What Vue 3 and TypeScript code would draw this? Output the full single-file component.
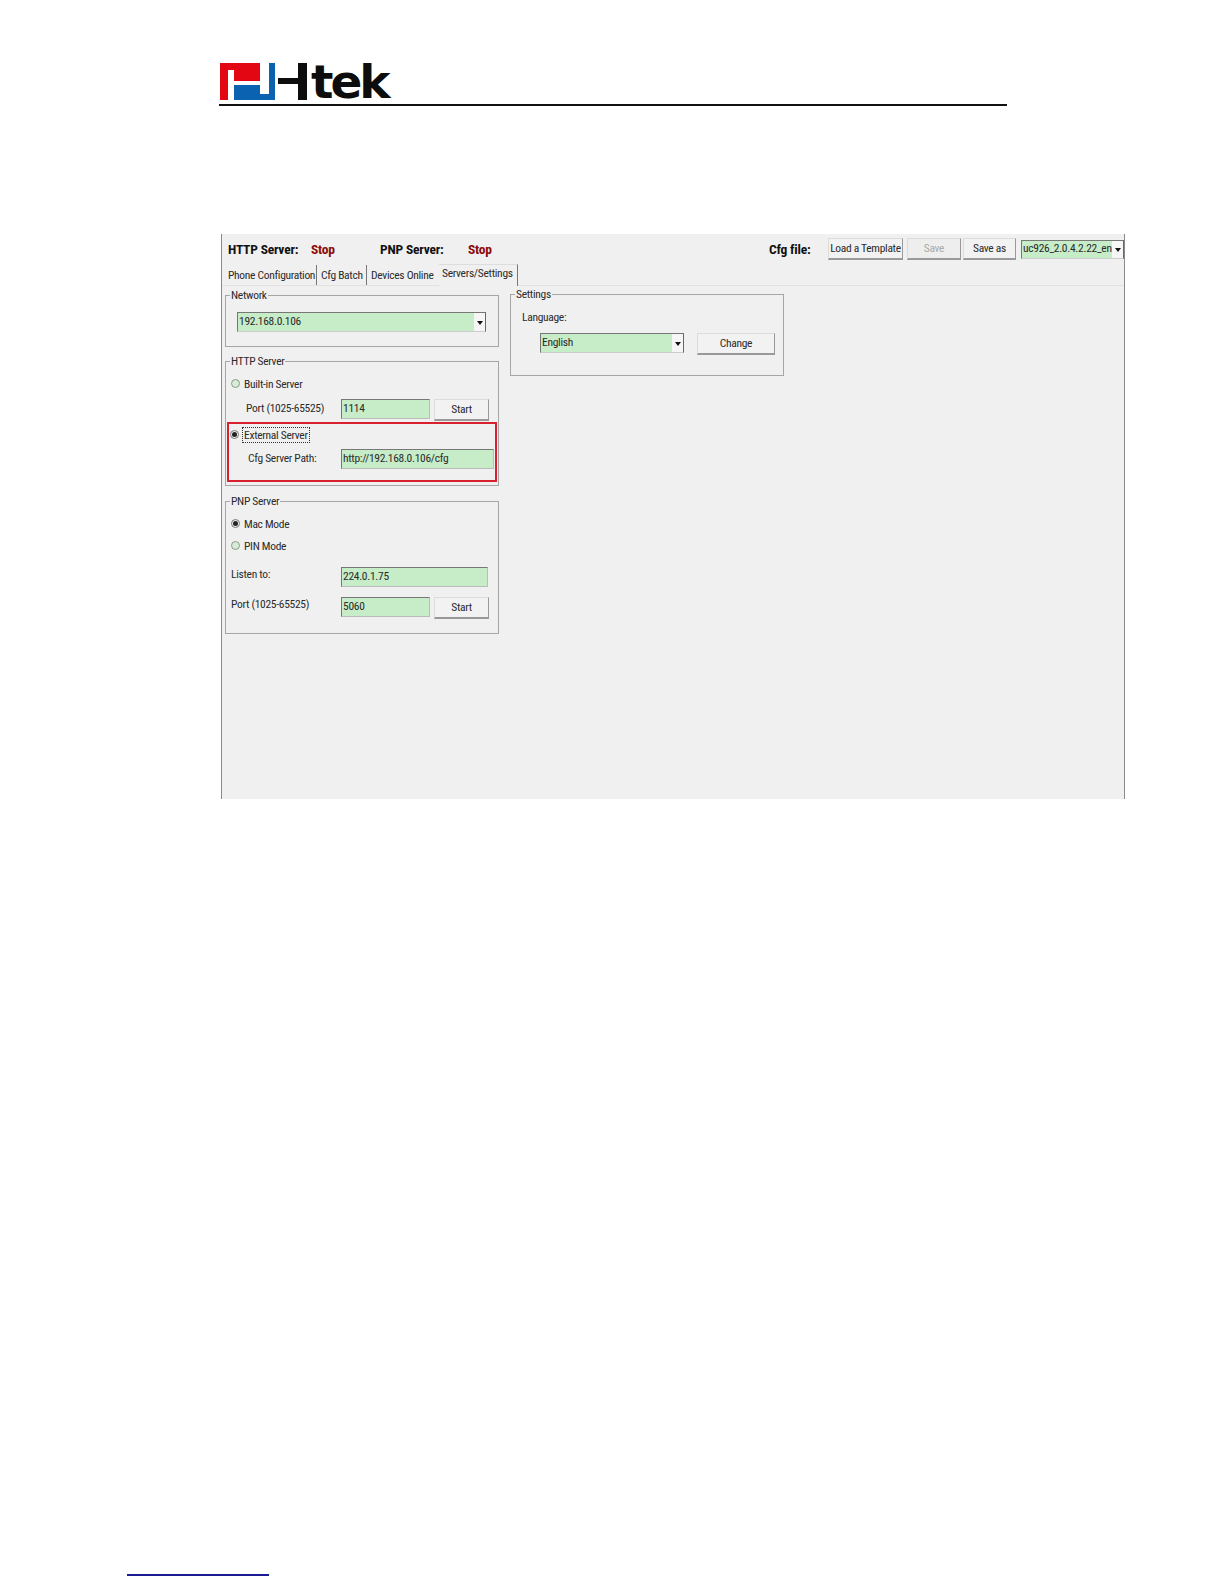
<script setup lang="ts">
const tabs: string[] = ['Phone Configuration', 'Cfg Batch', 'Devices Online']
</script>

<template>
  <div class="page">
    <header class="head">
      <div class="logo">
        <svg class="mark" width="88" height="38" viewBox="0 0 88 38" aria-hidden="true">
          <path fill="#e30613" d="M0 0H40V18H14V7H8V37H0Z" />
          <path fill="#0a62b0" d="M49 0H55V37H14V22H40V31H49Z" />
          <path fill="#0d0d0d" d="M58 15H78V0H87V37H78V21H58Z" />
        </svg>
        <span class="word">tek</span>
      </div>
      <div class="rule"></div>
    </header>

    <main class="window">
      <div class="toolbar">
        <b class="t-a">HTTP Server:</b>
        <b class="stop s-a">Stop</b>
        <b class="t-b">PNP Server:</b>
        <b class="stop s-b">Stop</b>
        <b class="t-c">Cfg file:</b>
        <button class="btn b-load">Load a Template</button>
        <button class="btn b-save" disabled>Save</button>
        <button class="btn b-saveas">Save as</button>
        <div class="combo c-file"><span>uc926_2.0.4.2.22_en</span><i class="arrow"></i></div>
      </div>

      <nav class="tabs">
        <span v-for="tab in tabs" :key="tab" class="tab">{{ tab }}</span>
        <span class="tab active">Servers/Settings</span>
      </nav>

      <div class="body">
        <div class="left">
          <section class="group g-net">
            <span class="legend">Network</span>
            <div class="combo c-net"><span>192.168.0.106</span><i class="arrow"></i></div>
          </section>

          <section class="group g-http">
            <span class="legend">HTTP Server</span>
            <label class="radio r-built"><i class="dot"></i>Built-in Server</label>
            <div class="row r-port">
              <span class="lab l-port">Port (1025-65525)</span>
              <div class="input i-short">1114</div>
              <button class="btn b-start">Start</button>
            </div>
            <div class="redbox">
              <label class="radio r-ext"><i class="dot on"></i><span class="focus">External Server</span></label>
              <div class="row r-cfg">
                <span class="lab l-cfg">Cfg Server Path:</span>
                <div class="input i-path">http://192.168.0.106/cfg</div>
              </div>
            </div>
          </section>

          <section class="group g-pnp">
            <span class="legend">PNP Server</span>
            <label class="radio r-mac"><i class="dot on"></i>Mac Mode</label>
            <label class="radio r-pin"><i class="dot"></i>PIN Mode</label>
            <div class="row r-listen">
              <span class="lab l-plain">Listen to:</span>
              <div class="input i-listen">224.0.1.75</div>
            </div>
            <div class="row r-port2">
              <span class="lab l-plain">Port (1025-65525)</span>
              <div class="input i-short">5060</div>
              <button class="btn b-start">Start</button>
            </div>
          </section>
        </div>

        <section class="group g-set">
          <span class="legend">Settings</span>
          <div class="lang">Language:</div>
          <div class="row r-lang">
            <div class="combo c-lang"><span>English</span><i class="arrow"></i></div>
            <button class="btn b-change">Change</button>
          </div>
        </section>
      </div>
    </main>

    <div class="foot"></div>
  </div>
</template>

<style>
html, body { margin: 0; background: #fff; }
</style>

<style scoped>
.page {
  width: 1224px;
  height: 1584px;
  overflow: hidden;
  background: #fff;
  font-family: "Roboto", "Liberation Sans", sans-serif;
  font-stretch: 75%;
  font-size: 11.5px;
  letter-spacing: -0.3px;
  color: #2b2b2b;
}
.head { padding: 63px 0 0 220px; }
.logo { display: flex; height: 38px; }
.mark { flex: none; }
.word {
  margin-left: 3px;
  font-family: "DejaVu Sans", sans-serif;
  font-weight: 700;
  font-stretch: normal;
  font-size: 47px;
  line-height: 38px;
  letter-spacing: -3px;
  color: #0d0d0d;
}
.rule { width: 788px; height: 2px; margin: 3px 0 0 -1px; background: #111; }

.window {
  box-sizing: border-box;
  width: 904px;
  height: 565px;
  margin: 128px 0 0 221px;
  background: #f0f0f0;
  border-left: 1px solid #8a8a8a;
  border-right: 1px solid #8a8a8a;
}
.toolbar { display: flex; align-items: center; height: 30px; padding-left: 6px; }
.toolbar b { font-size: 13.5px; letter-spacing: -0.2px; color: #111; white-space: nowrap; }
.t-a { width: 83px; }
.toolbar .stop { color: #8b0a0a; }
.s-a { width: 69px; }
.t-b { width: 88px; }
.s-b { width: 301px; }
.t-c { width: 59px; }

.btn {
  box-sizing: border-box;
  flex: none;
  padding: 0 0 1px;
  height: 22px;
  font: inherit;
  letter-spacing: inherit;
  color: #2b2b2b;
  background: #f2f2f2;
  border: 1px solid #dcdcdc;
  border-right: 1px solid #999;
  border-bottom: 2px solid #999;
  white-space: nowrap;
}
.b-load { width: 75px; }
.b-save { width: 54px; margin-left: 4px; color: #aaa; background: #eee; }
.b-saveas { width: 53px; margin-left: 2px; }
.b-start { width: 55px; margin-left: 4px; }
.b-change { width: 78px; height: 22px; margin-left: 13px; }

.combo {
  box-sizing: border-box;
  display: flex;
  align-items: center;
  justify-content: space-between;
  background: #c6ecc8;
  border: 1px solid #777;
  border-right-color: #666;
  border-bottom-color: #ccc;
  padding-left: 1px;
  white-space: nowrap;
}
.combo span { margin-top: -2px; }
.arrow {
  position: relative;
  flex: none;
  align-self: stretch;
  width: 11px;
  background: #f6f6f6;
}
.arrow::after {
  content: "";
  position: absolute;
  left: 3px;
  top: calc(50% - 1px);
  border: 3px solid transparent;
  border-top: 4px solid #111;
  border-bottom: 0;
}
.c-file { width: 103px; height: 19px; margin-left: 5px; }
.c-net { width: 249px; height: 20px; }
.c-lang { width: 144px; height: 20px; }

.tabs { display: flex; align-items: flex-end; height: 21px; padding-left: 5px; border-bottom: 1px solid #e2e2e2; }
.tab {
  box-sizing: border-box;
  height: 20px;
  line-height: 21px;
  padding: 0 3px 0 1px;
  border-right: 1px solid #777;
  margin-right: 3px;
  white-space: nowrap;
}
.tabs .tab:nth-child(1) { width: 90px; }
.tabs .tab:nth-child(2) { width: 47px; }
.tabs .tab:nth-child(3) { width: 69px; margin-right: 0; border-right: 0; }
.tabs .active {
  width: 79px;
  height: 22px;
  line-height: 17px;
  padding-left: 3px;
  margin: 0 0 -1px;
  border-right: 1px solid #777;
  border-top: 1px solid #ddd;
  background: #f0f0f0;
}

.body { display: flex; align-items: flex-start; padding: 9px 0 0 3px; }
.left { width: 274px; }
.group {
  box-sizing: border-box;
  position: relative;
  border: 1px solid #a6a6a6;
}
.legend {
  position: absolute;
  top: -7px;
  left: 4px;
  padding: 0 1px;
  line-height: 12px;
  background: #f0f0f0;
}
.g-net { height: 52px; padding: 16px 0 0 11px; }
.g-http { height: 125px; margin-top: 14px; padding-top: 11px; }
.g-pnp { height: 133px; margin-top: 15px; padding-top: 11px; }
.g-set { width: 274px; height: 82px; margin: -1px 0 0 11px; }

.row { display: flex; align-items: flex-start; }
.lab { line-height: 19px; white-space: nowrap; }
.input {
  box-sizing: border-box;
  height: 20px;
  line-height: 17px;
  padding-left: 1px;
  background: #c6ecc8;
  border: 1px solid #777;
  border-right-color: #bbb;
  border-bottom-color: #bbb;
  white-space: nowrap;
}
.i-short { width: 89px; }
.i-path { width: 153px; }
.i-listen { width: 147px; }

.radio { display: flex; align-items: center; height: 22px; padding-left: 5px; }
.dot {
  box-sizing: border-box;
  position: relative;
  flex: none;
  width: 9px;
  height: 9px;
  margin: -1px 4px 0 0;
  border-radius: 50%;
  border: 1px solid #8a9a8a;
  background: #d6ecd6;
}
.dot.on { border-color: #777; background: #eee; }
.dot.on::after {
  content: "";
  position: absolute;
  left: 1px;
  top: 1px;
  width: 5px;
  height: 5px;
  border-radius: 50%;
  background: #222;
}
.r-port { margin-top: 4px; }
.l-port { width: 95px; padding-left: 20px; }
.redbox {
  box-sizing: border-box;
  width: 270px;
  height: 60px;
  margin: 1px 0 0 1px;
  border: 2px solid #d8202e;
}
.r-ext { height: 22px; margin-top: 0; padding-left: 1px; }
.focus { outline: 1px dotted #333; outline-offset: 0; padding: 0 1px; margin-left: 0; line-height: 14px; }
.r-cfg { margin-top: 3px; }
.l-cfg { width: 93px; padding-left: 19px; }
.l-plain { width: 110px; padding-left: 5px; line-height: 15px; }
.r-listen { margin-top: 10px; }
.r-port2 { margin-top: 10px; }

.lang { padding: 16px 0 0 11px; line-height: 13px; }
.r-lang { margin: 9px 0 0 29px; }

.foot { width: 142px; height: 2px; margin: 775px 0 0 127px; background: #1c1c92; }
</style>
